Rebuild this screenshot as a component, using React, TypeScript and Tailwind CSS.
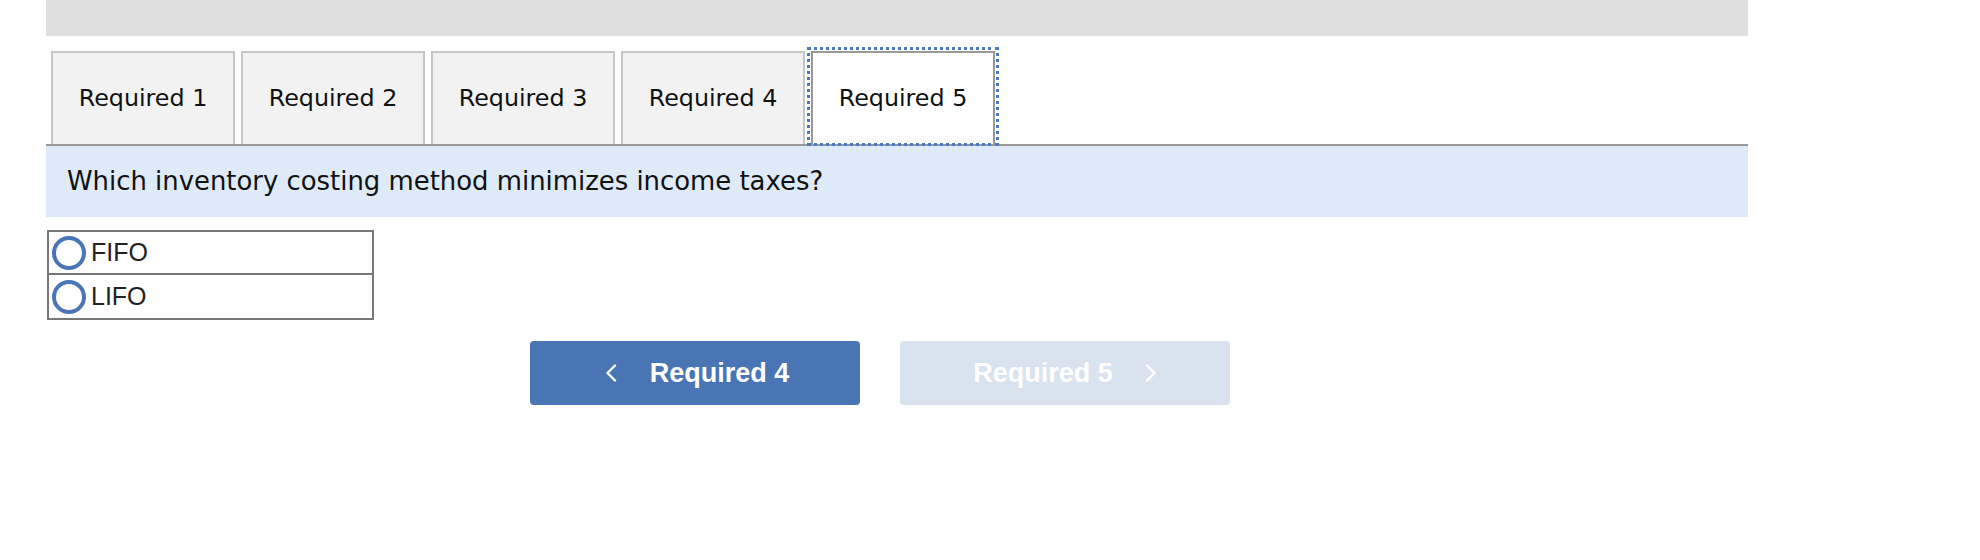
import React from 'react';

const tabs = ['Required 1', 'Required 2', 'Required 3', 'Required 4', 'Required 5'];
const options = ['FIFO', 'LIFO'];

function Chevron({ dir }: { dir: 'left' | 'right' }) {
    return (
        <svg width="12" height="18" viewBox="0 0 12 18" fill="none">
            <polyline
                points={dir === 'left' ? '10,1.5 2.5,9 10,16.5' : '2,1.5 9.5,9 2,16.5'}
                stroke="white"
                strokeWidth="2.4"
                strokeLinecap="round"
                strokeLinejoin="round"
            />
        </svg>
    );
}

const App = () => {
    const active = 4;

    return (
        <div className="w-full h-[560px] bg-white pl-[46px]">
            <div className="w-[1702px]">
                <div className="h-[36px] bg-[#dfdfdf]" />

                {/* tabs */}
                <div className="mt-[15px] flex gap-[6px] pl-[5px] border-b-2 border-[#999999]">
                    {tabs.map((t, i) => (
                        <div
                            key={t}
                            className={
                                i === active
                                    ? 'relative w-[184px] h-[93px] flex items-center justify-center bg-white border-2 border-b-0 border-[#999999] text-[23.8px] text-[#111111] font-["DejaVu_Sans",sans-serif]'
                                    : 'w-[184px] h-[93px] flex items-center justify-center bg-[#f2f2f2] border-2 border-b-0 border-[#c6c6c6] text-[23.8px] text-[#111111] font-["DejaVu_Sans",sans-serif]'
                            }
                        >
                            {t}
                            {i === active && (
                                <span className="absolute -top-[6px] -left-[6px] -right-[6px] -bottom-[2px] border-[3px] border-dotted border-[#4a78c2] pointer-events-none" />
                            )}
                        </div>
                    ))}
                </div>

                <div className="h-[71px] bg-[#deeaf7] flex items-center pl-[21px] text-[25.9px] text-[#111111] font-['DejaVu_Sans',sans-serif]">
                    Which inventory costing method minimizes income taxes?
                </div>

                {/* answer options */}
                <div className="mt-[13px] ml-[1px] w-[327px] border-2 border-[#777777] font-['Liberation_Sans',Arial,sans-serif]">
                    {options.map((o, i) => (
                        <label
                            key={o}
                            className={`h-[43px] flex items-center pl-[3px] gap-[5px] text-[25px] text-[#222222] cursor-pointer ${i === 0 ? 'border-b-2 border-[#777777]' : ''}`}
                        >
                            <span className="w-[34px] h-[34px] rounded-full border-[4px] border-[#4a76b8] bg-white" />
                            {o}
                        </label>
                    ))}
                </div>

                {/* nav buttons */}
                <div className="mt-[21px] ml-[484px] flex gap-[40px] font-['Liberation_Sans',Arial,sans-serif] font-bold text-[27px] text-white">
                    <button className="w-[330px] h-[64px] rounded-[4px] bg-[#4a75b5] flex items-center justify-center gap-[33px] pl-[4px]">
                        <Chevron dir="left" />
                        <span>Required 4</span>
                    </button>
                    <button disabled className="w-[330px] h-[64px] rounded-[4px] bg-[#d9e3ef] flex items-center justify-center gap-[32px]">
                        <span>Required 5</span>
                        <Chevron dir="right" />
                    </button>
                </div>
            </div>
        </div>
    );
};

export default App;
